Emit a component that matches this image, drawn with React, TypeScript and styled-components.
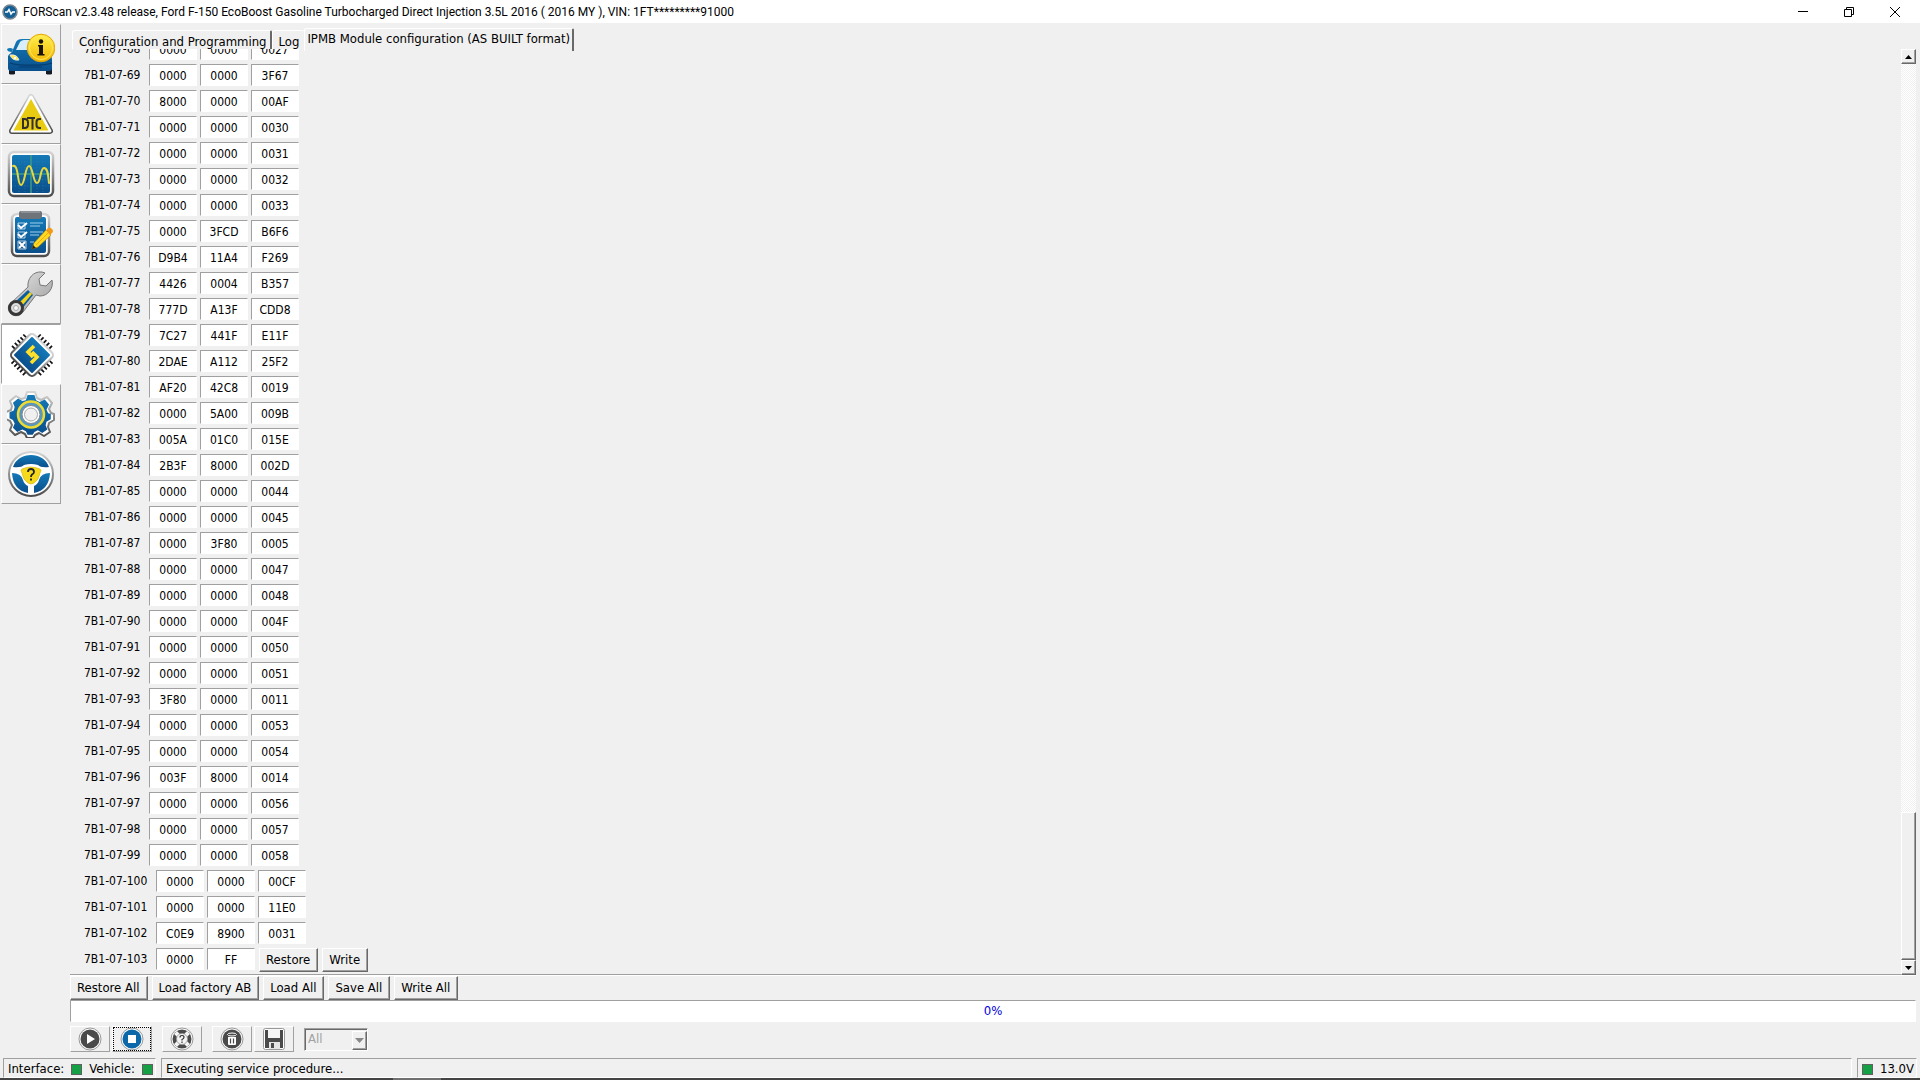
import React, { useState } from "react";
import styled, { createGlobalStyle, css } from "styled-components";

const FACE = "#f0f0f0";
const SHADE = "#a0a0a0";
const DARK = "#696969";
const LIGHT = "#ffffff";

const Global = createGlobalStyle`
  * { box-sizing: border-box; }
  body { margin: 0; overflow: hidden; background: ${FACE}; }
  body, button, input, select {
    font-family: Tahoma, "DejaVu Sans Condensed", "Noto Sans", sans-serif;
    font-size: 13px;
    line-height: 16px;
    color: #000;
  }
`;

const Window = styled.div`
  display: flex;
  flex-direction: column;
  height: 100vh;
  background: ${FACE};
`;

const TitleBar = styled.header`
  display: flex;
  align-items: center;
  flex: none;
  height: 23px;
  padding: 0 2px;
  background: #fff;
`;

const Title = styled.h1`
  flex: 1;
  margin: 0 0 0 5px;
  font: 400 12px/16px "Segoe UI", Roboto, sans-serif;
  white-space: nowrap;
`;

const CaptionButton = styled.button`
  display: grid;
  place-items: center;
  width: 46px;
  height: 22px;
  padding: 0;
  border: 0;
  background: none;
`;

const Body = styled.div`
  display: flex;
  flex: 1;
  min-height: 0;
`;

const Sidebar = styled.nav`
  display: flex;
  flex-direction: column;
  flex: none;
  width: 62px;
  padding: 1px 1px 0 1px;
`;

const SideButton = styled.button<{ $active?: boolean }>`
  display: grid;
  place-items: center;
  height: 60px;
  padding: ${(p) => (p.$active ? "2px 0 0 2px" : "0")};
  border: 1px solid;
  border-color: ${(p) => (p.$active ? `${SHADE} #fff #fff ${SHADE}` : `#fff ${SHADE} ${SHADE} #fff`)};
  background: ${(p) => (p.$active ? "#fff" : FACE)};
  svg { width: 48px; height: 48px; }
`;

const Main = styled.main`
  display: flex;
  flex-direction: column;
  flex: 1;
  min-width: 0;
  padding: 5px 4px 0 8px;
`;

const Tabs = styled.div`
  display: flex;
  align-items: flex-end;
  flex: none;
  height: 21px;
  padding-left: 2px;
`;

const Tab = styled.button<{ $active?: boolean }>`
  position: relative;
  flex: none;
  height: ${(p) => (p.$active ? "23px" : "19px")};
  margin-bottom: ${(p) => (p.$active ? "-2px" : "0")};
  padding: ${(p) => (p.$active ? "0 2px 3px 2px" : "3px 3px 0 6px")};
  border: 1px solid ${LIGHT};
  border-right: 2px solid ${DARK};
  border-bottom: 0;
  border-radius: 3px 2px 0 0;
  background: ${FACE};
  white-space: nowrap;
  z-index: ${(p) => (p.$active ? 2 : 1)};
`;

const LastTab = styled(Tab)`
  padding-right: 5px;
  border-right: 0;
`;

const Pane = styled.section`
  display: flex;
  flex: 1;
  min-height: 0;
`;

const Rows = styled.div`
  display: flex;
  flex-direction: column;
  justify-content: flex-end;
  flex: 1;
  overflow: hidden;
  padding-left: 14px;
  border-bottom: 1px solid ${SHADE};
`;

const Row = styled.div`
  display: flex;
  flex: none;
  gap: 3px;
  height: 26px;
`;

const RowLabel = styled.span<{ $wide: boolean }>`
  width: ${(p) => (p.$wide ? "69px" : "62px")};
  padding-top: 3px;
  font-size: 12px;
  white-space: nowrap;
`;

const Field = styled.input`
  width: 48px;
  height: 22px;
  padding: 2px 0 0;
  border: 1px solid;
  border-color: ${SHADE} #fff #fff ${SHADE};
  border-radius: 0;
  background: #fff;
  font-size: 12px;
  text-align: center;
  outline: 0;
`;

const PushButton = styled.button`
  flex: none;
  height: 24px;
  padding: 0 7px 0 6px;
  border: 1px solid;
  border-color: #fff ${DARK} ${DARK} #fff;
  box-shadow: inset -1px -1px 0 ${SHADE};
  background: ${FACE};
  white-space: nowrap;
`;

const RowActions = styled.div`
  display: flex;
  gap: 4px;
  padding-left: 1px;
`;

const Scrollbar = styled.div`
  display: flex;
  flex-direction: column;
  justify-content: space-between;
  flex: none;
  width: 15px;
  background: repeating-conic-gradient(#fff 0 25%, ${FACE} 0 50%) 0 0 / 2px 2px;
`;

const bevel = css`
  border: 1px solid;
  border-color: #fff ${DARK} ${DARK} #fff;
  box-shadow: inset -1px -1px 0 ${SHADE};
  background: ${FACE};
`;

const ScrollButton = styled.button`
  display: grid;
  place-items: center;
  width: 15px;
  height: 15px;
  padding: 0;
  ${bevel}
`;

const ScrollTrack = styled.div`
  display: flex;
  flex: 1;
  flex-direction: column;
  justify-content: flex-end;
`;

const Thumb = styled.div`
  height: 16.5%;
  ${bevel}
`;

const Actions = styled.div`
  display: flex;
  flex: none;
  gap: 4px;
  border-top: 1px solid #fff;
`;

const Progress = styled.div`
  display: grid;
  place-items: center;
  flex: none;
  height: 22px;
  border: 1px solid;
  border-color: ${SHADE} #fff #fff ${SHADE};
  background: #fff;
  color: #0000e0;
`;

const Toolbar = styled.div`
  display: flex;
  align-items: center;
  flex: none;
  padding: 4px 0 6px;
`;

const ToolButton = styled.button<{ $gap?: number; $focused?: boolean }>`
  display: grid;
  place-items: center;
  width: 40px;
  height: 26px;
  margin-right: ${(p) => p.$gap ?? 2}px;
  padding: 0;
  border: 1px solid;
  border-color: #fff ${SHADE} ${SHADE} #fff;
  background: ${FACE};
  outline: ${(p) => (p.$focused ? "1px dotted #000" : "0")};
  outline-offset: -2px;
  svg { width: 24px; height: 24px; }
`;

const SelectBox = styled.div`
  display: flex;
  width: 64px;
  height: 23px;
  border: 1px solid;
  border-color: ${SHADE} #fff #fff ${SHADE};
  box-shadow: inset 1px 1px 0 ${DARK};
`;

const Select = styled.select`
  flex: 1;
  appearance: none;
  padding: 0 0 0 3px;
  border: 0;
  background: none;
  color: #a0a0a0;
  opacity: 1;
`;

const DropArrow = styled.span`
  display: grid;
  place-items: center;
  width: 15px;
  height: 19px;
  margin-top: 2px;
  pointer-events: none;
  ${bevel}
`;

const StatusBar = styled.footer`
  display: flex;
  flex: none;
  gap: 5px;
  height: 20px;
  padding: 0 3px;
`;

const StatusPanel = styled.div<{ $grow?: boolean }>`
  display: flex;
  align-items: center;
  flex: ${(p) => (p.$grow ? "1" : "none")};
  gap: 7px;
  padding: 2px 2px 0 4px;
  border: 1px solid;
  border-color: ${SHADE} #fff #fff ${SHADE};
  white-space: nowrap;
`;

const Lamp = styled.i`
  width: 11px;
  height: 11px;
  border: 1px solid #606060;
  background: #16a045;
`;

const Taskbar = styled.div`
  flex: none;
  height: 2px;
  padding-left: 393px;
  background: #444;
  &::before { content: ""; display: block; width: 48px; height: 2px; background: #707070; }
`;

const DATA = `68 0000 0000 0027
69 0000 0000 3F67
70 8000 0000 00AF
71 0000 0000 0030
72 0000 0000 0031
73 0000 0000 0032
74 0000 0000 0033
75 0000 3FCD B6F6
76 D9B4 11A4 F269
77 4426 0004 B357
78 777D A13F CDD8
79 7C27 441F E11F
80 2DAE A112 25F2
81 AF20 42C8 0019
82 0000 5A00 009B
83 005A 01C0 015E
84 2B3F 8000 002D
85 0000 0000 0044
86 0000 0000 0045
87 0000 3F80 0005
88 0000 0000 0047
89 0000 0000 0048
90 0000 0000 004F
91 0000 0000 0050
92 0000 0000 0051
93 3F80 0000 0011
94 0000 0000 0053
95 0000 0000 0054
96 003F 8000 0014
97 0000 0000 0056
98 0000 0000 0057
99 0000 0000 0058
100 0000 0000 00CF
101 0000 0000 11E0
102 C0E9 8900 0031
103 0000 FF`
  .split("\n")
  .map((line) => line.split(" "));

const HiddenDefs = styled.svg`
  position: absolute;
`;

function Gradients() {
  return (
    <HiddenDefs width="0" height="0" aria-hidden="true">
      <defs>
        <linearGradient id="blue" x1="0" y1="0" x2="0" y2="1">
          <stop offset="0" stopColor="#1379b6" />
          <stop offset="1" stopColor="#0a4f8c" />
        </linearGradient>
        <linearGradient id="gold" x1="0" y1="0" x2="0" y2="1">
          <stop offset="0" stopColor="#fff04a" />
          <stop offset="1" stopColor="#f2b705" />
        </linearGradient>
        <linearGradient id="rim" x1="0" y1="0" x2="0" y2="1">
          <stop offset="0" stopColor="#d4d4d4" />
          <stop offset="1" stopColor="#4c4c4c" />
        </linearGradient>
        <linearGradient id="steel" x1="0" y1="0" x2="1" y2="1">
          <stop offset="0" stopColor="#e8e8e8" />
          <stop offset="1" stopColor="#999" />
        </linearGradient>
      </defs>
    </HiddenDefs>
  );
}

const CarIcon = () => (
  <svg viewBox="0 0 48 48">
    <path d="M2 37h6v7q-3 1-6 0zM39 37h6v7q-3 1-6 0z" fill="#151b22" />
    <path d="M1 26c1-2 3-3 4-4l4-10c1-2 3-3 6-3h17c4 0 5 2 7 6l4 9c2 2 2 5 2 7v7c0 2-1 3-3 3H4c-2 0-3-1-3-3v-6c0-3 0-4 0-6z" fill="url(#blue)" />
    <path d="M0 19q3-2 6 0l-1 3c-3 0-5-1-5-3z" fill="#1379b6" />
    <path d="M9 20l4-8c1-1 2-2 4-2h6l-2 10z" fill="#d8eefa" />
    <path d="M3 33c8 3 34 3 42 0M12 37h23M14 35h20" stroke="#063c6e" strokeWidth="1.200" fill="none" />
    <path d="M3 25q7-1 9 5-7 1-9-5z" fill="#ffe44c" stroke="#e8f3fa" strokeWidth=".8" />
    <circle cx="8" cy="28" r="1.200" fill="#fff" />
    <circle cx="34" cy="18" r="13.800" fill="url(#gold)" stroke="#e6a600" strokeWidth="1" />
    <circle cx="34" cy="18" r="11.500" fill="none" stroke="#ffe75a" strokeWidth="1" />
    <circle cx="34" cy="11.500" r="2.200" fill="#17130a" />
    <path d="M31 15h5v9h1.500v1.500h-7V24H32v-7.500h-1z" fill="#17130a" />
  </svg>
);

const DtcIcon = () => (
  <svg viewBox="0 0 48 48">
    <path d="M24 7L43 41H5z" stroke="url(#rim)" strokeWidth="6" strokeLinejoin="round" fill="#fff" />
    <path d="M24 7L43 41H5z" stroke="#fff" strokeWidth="3" strokeLinejoin="round" fill="url(#gold)" />
    <path d="M24 9L41.500 40.500h-35z" fill="#e9cb12" />
    <g fill="none" stroke="#33302a" strokeWidth="2">
      <path d="M16 29v9h1.500q3.500 0 3.500-3.500v-2q0-3.500-3.500-3.500zM20 28h8M25.500 28v11.500M34 29h-1.500q-3 0-3 3v3q0 3 3 3H34" />
    </g>
  </svg>
);

const ScopeIcon = () => (
  <svg viewBox="0 0 48 48">
    <rect x="2" y="2" width="44" height="44" rx="5" fill="#fff" stroke="url(#rim)" strokeWidth="2.500" />
    <rect x="5" y="5" width="38" height="38" rx="2" fill="url(#blue)" />
    <path d="M24 5v38M5 24h38" stroke="#3f9a84" strokeWidth="1.500" />
    <path d="M12 5v38M18 5v38M30 5v38M36 5v38M5 12h38M5 18h38M5 30h38M5 36h38" stroke="#2f84a8" strokeWidth=".5" strokeDasharray="1 2" />
    <path d="M6 16c6-2 4 19 8 19s4-19 8-19 4 17 8 17 3-15 7-15 4 7 5 15" fill="none" stroke="#e8d63a" strokeWidth="2" strokeLinecap="round" />
  </svg>
);

const ClipboardIcon = () => (
  <svg viewBox="0 0 48 48">
    <rect x="5" y="4" width="37" height="42" rx="5" fill="#fff" stroke="url(#rim)" strokeWidth="2.500" />
    <rect x="8" y="7" width="31" height="36" rx="2" fill="url(#blue)" />
    <path d="M12 3q0-2 2-2h19q2 0 2 2v3q0 3-3 3H15q-3 0-3-3z" fill="#6e747a" />
    <path d="M14 2h19" stroke="#a9afb3" />
    <g fill="none" stroke="#fff" strokeWidth="2">
      <path d="M11 15l3 3 6-5M11 24l3 3 6-5" />
      <path d="M12 32l6 6M18 32l-6 6" />
      <path d="M11 13h7v6h-7zM11 22h7v6h-7zM11 31h8v8h-8z" strokeWidth=".7" />
    </g>
    <path d="M23 13h13M23 16h10M23 22h13M23 25h9M23 32h4" stroke="#9bd0ee" strokeWidth="1" />
    <path d="M25 39l2-6 12-13 5 5-13 12z" fill="#ffda21" stroke="#b37d00" strokeWidth=".6" />
    <path d="M39 20l2-2q2-1 4 1t0 4l-2 2z" fill="#f29a18" />
    <path d="M25 39l1-4 3 3z" fill="#29231c" />
    <path d="M29 35l12-12" stroke="#f0a914" />
  </svg>
);

const WrenchIcon = () => (
  <svg viewBox="0 0 48 48">
    <path d="M3 34L21 17c-1-8 5-16 14-15l3 1-6 6 1 6 6 1 6-6c2 8-4 16-12 16l-4-1-13 17c-4 6-12 4-14-1-1-3-1-5 1-7z" fill="url(#steel)" stroke="#777" strokeWidth="1" />
    <path d="M8 32L21 20l5 5-11 14z" fill="#0b5e9e" />
    <path d="M12 33l11-11 2 2-11 13z" fill="#f2d31a" />
    <circle cx="9" cy="38" r="6.500" fill="#ddd" stroke="#383838" strokeWidth="3" />
    <circle cx="9" cy="38" r="2.500" fill="#f7f7f7" stroke="#aaa" />
  </svg>
);

const ChipIcon = () => (
  <svg viewBox="0 0 48 48">
    <path d="M18 5L5 18M30 5l13 13M5 30l13 13M43 30L30 43" stroke="#111" strokeWidth="6" strokeDasharray="1.700 2.300" />
    <rect x="8" y="8" width="32" height="32" rx="4" transform="rotate(45 24 24)" fill="#fff" stroke="url(#rim)" strokeWidth="2" />
    <rect x="11" y="11" width="26" height="26" rx="1" transform="rotate(45 24 24)" fill="url(#blue)" />
    <path d="M26 15l-6 6 5 5M23 32l6-6-5-5" fill="none" stroke="#ffe02a" strokeWidth="3.600" />
  </svg>
);

const GEAR =
  "M20 2h8l2 6 4 2 6-3 5 6-3 6 2 4 3 1v6l-5 3-1 4 2 5-6 4-5-3-4 2-2 3h-6l-2-4-4-2-6 3-5-5 2-5-2-4-4-2v-7l5-2 1-4-2-5 6-5 5 3 4-1z";

const GearIcon = () => (
  <svg viewBox="0 0 48 48">
    <path d={GEAR} fill="#fff" stroke="url(#rim)" strokeWidth="2" strokeLinejoin="round" />
    <path d={GEAR} transform="translate(24 24) scale(.86) translate(-24 -24)" fill="url(#blue)" />
    <circle cx="24" cy="24.500" r="13" fill="#5898be" stroke="#eedb32" strokeWidth="2.500" />
    <circle cx="24" cy="24.500" r="9" fill="#fff" stroke="#888" strokeWidth="1" />
    <circle cx="24" cy="24.500" r="6.500" fill={FACE} stroke="#aaa" strokeWidth="1" />
  </svg>
);

const WheelIcon = () => (
  <svg viewBox="0 0 48 48">
    <circle cx="24" cy="24" r="22" fill="#fff" stroke="url(#rim)" strokeWidth="2" />
    <path d="M6 17C11 1 37 1 42 17q-8 1-11-2-7-2-14 0-3 3-11 2z" fill="url(#blue)" />
    <path d="M5 23q9 0 11 7 1 4 5 6v7Q6 40 5 23zM43 23q-9 0-11 7-1 4-5 6v7Q42 40 43 23z" fill="url(#blue)" />
    <path d="M15 19q9-4 18 0 2 1 0 4-1 7-6 10-3 2-6 0-5-3-6-10-2-3 0-4z" fill="#f4d91c" stroke="#d3b40c" strokeWidth=".6" />
    <path d="M21 22q0-3 3-3t3 3q0 1.500-2 2.500-1 1-1 2.500M24 28.500v2" fill="none" stroke="#222" strokeWidth="1.800" />
  </svg>
);

const Disc = ({ fill, children }: { fill: string; children: React.ReactNode }) => (
  <svg viewBox="0 0 24 24">
    <circle cx="12" cy="12" r="11" fill="#fff" />
    <circle cx="12" cy="12" r="9.500" fill={fill} />
    {children}
    <circle cx="12" cy="12" r="11" fill="none" stroke="#999" />
  </svg>
);

const PlayIcon = () => (
  <Disc fill="#4a4a4a">
    <path d="M9 7l8 5-8 5z" fill="#fff" />
  </Disc>
);

const StopIcon = () => (
  <Disc fill="#0c68a8">
    <rect x="8" y="8" width="8" height="8" fill="#fff" />
  </Disc>
);

const HelpIcon = () => (
  <Disc fill="#4a4a4a">
    <path d="M5.500 5.500l13 13M18.500 5.500l-13 13" stroke="#f4f4f4" strokeWidth="4" />
    <circle cx="12" cy="12" r="5.500" fill="#f4f4f4" stroke="#999" strokeWidth=".8" />
    <path d="M10 10.500q0-2 2-2t2 1.700q0 1.300-2 2.300v1M12 14.500v1.500" fill="none" stroke="#333" strokeWidth="1.200" />
  </Disc>
);

const TrashIcon = () => (
  <Disc fill="#4a4a4a">
    <ellipse cx="12" cy="7.500" rx="4.500" ry="1.500" fill="none" stroke="#fff" />
    <path d="M8 10h8v7q0 1-1 1H9q-1 0-1-1z" fill="#fff" />
    <path d="M10.500 11.500v5M13.500 11.500v5" stroke="#4a4a4a" strokeWidth="1.200" />
  </Disc>
);

const DiskIcon = () => (
  <svg viewBox="0 0 24 24">
    <rect x="1.500" y="1.500" width="21" height="21" rx="2" fill="#fff" stroke="#999" />
    <path d="M3 3h18v18H3z" fill="#4a4a4a" />
    <path d="M6 2h12v9H6z" fill="#f6f6f6" />
    <path d="M7 15h11v7H7z" fill="#e4e4e4" />
    <path d="M9 16h3v5H9z" fill="#4a4a4a" />
  </svg>
);

const Triangle = ({ up, fill = "#000", size = 7 }: { up?: boolean; fill?: string; size?: number }) => (
  <svg width={size} height={(size + 1) / 2} viewBox="0 0 7 4" preserveAspectRatio="none">
    <path d={up ? "M0 4L3.500 0 7 4z" : "M0 0h7L3.500 4z"} fill={fill} />
  </svg>
);

const SIDE = [
  { name: "Vehicle information", Icon: CarIcon },
  { name: "Trouble codes", Icon: DtcIcon },
  { name: "Oscilloscope", Icon: ScopeIcon },
  { name: "Tests", Icon: ClipboardIcon },
  { name: "Service", Icon: WrenchIcon },
  { name: "Configuration", Icon: ChipIcon },
  { name: "Settings", Icon: GearIcon },
  { name: "Help", Icon: WheelIcon },
];

function ModuleRow({ cells }: { cells: string[] }) {
  const [index, ...words] = cells;
  const name = `7B1-07-${index}`;
  const [values, setValues] = useState(words);
  return (
    <Row>
      <RowLabel $wide={index.length > 2}>{name}</RowLabel>
      {values.map((value, i) => (
        <Field
          key={i}
          aria-label={`${name} word ${i + 1}`}
          value={value}
          maxLength={4}
          onChange={(e) => setValues(values.map((v, n) => (n === i ? e.target.value : v)))}
        />
      ))}
      {words.length < 3 && (
        <RowActions>
          <PushButton>Restore</PushButton>
          <PushButton>Write</PushButton>
        </RowActions>
      )}
    </Row>
  );
}

export default function App() {
  return (
    <Window>
      <Global />
      <Gradients />
      <TitleBar>
        <svg width="16" height="16" viewBox="0 0 16 16">
          <circle cx="8" cy="8" r="7" fill="#145f96" stroke="#7b8790" strokeWidth="1.500" />
          <path d="M3 8h2.500L7 5.500l2 4.500 1.500-2H13" fill="none" stroke="#fff" strokeWidth="1.500" />
        </svg>
        <Title>
          FORScan v2.3.48 release, Ford F-150 EcoBoost Gasoline Turbocharged Direct Injection 3.5L 2016 ( 2016 MY ), VIN: 1FT*********91000
        </Title>
        <CaptionButton aria-label="Minimize">
          <svg width="10" height="10"><path d="M0 4.500h10" stroke="#000" /></svg>
        </CaptionButton>
        <CaptionButton aria-label="Restore window">
          <svg width="10" height="10"><path d="M.5 2.500h7v7h-7zM2.500 2.500v-2h7v7h-2" fill="none" stroke="#000" /></svg>
        </CaptionButton>
        <CaptionButton aria-label="Close">
          <svg width="10" height="10"><path d="M0 0l10 10M10 0L0 10" stroke="#000" /></svg>
        </CaptionButton>
      </TitleBar>
      <Body>
        <Sidebar>
          {SIDE.map(({ name, Icon }) => (
            <SideButton key={name} aria-label={name} $active={name === "Configuration"}>
              <Icon />
            </SideButton>
          ))}
        </Sidebar>
        <Main>
          <Tabs>
            <Tab>Configuration and Programming</Tab>
            <LastTab>Log</LastTab>
            <Tab $active>IPMB Module configuration (AS BUILT format)</Tab>
          </Tabs>
          <Pane>
            <Rows>
              {DATA.map((cells) => (
                <ModuleRow key={cells[0]} cells={cells} />
              ))}
            </Rows>
            <Scrollbar>
              <ScrollButton aria-label="Scroll up"><Triangle up /></ScrollButton>
              <ScrollTrack><Thumb /></ScrollTrack>
              <ScrollButton aria-label="Scroll down"><Triangle /></ScrollButton>
            </Scrollbar>
          </Pane>
          <Actions>
            <PushButton>Restore All</PushButton>
            <PushButton>Load factory AB</PushButton>
            <PushButton>Load All</PushButton>
            <PushButton>Save All</PushButton>
            <PushButton>Write All</PushButton>
          </Actions>
          <Progress>0%</Progress>
          <Toolbar>
            <ToolButton aria-label="Start"><PlayIcon /></ToolButton>
            <ToolButton aria-label="Stop" $focused $gap={10}><StopIcon /></ToolButton>
            <ToolButton aria-label="Procedure help" $gap={10}><HelpIcon /></ToolButton>
            <ToolButton aria-label="Clear"><TrashIcon /></ToolButton>
            <ToolButton aria-label="Save" $gap={10}><DiskIcon /></ToolButton>
            <SelectBox>
              <Select aria-label="Filter" disabled><option>All</option></Select>
              <DropArrow><Triangle fill="#888" size={9} /></DropArrow>
            </SelectBox>
          </Toolbar>
        </Main>
      </Body>
      <StatusBar>
        <StatusPanel>
          <span>Interface:</span>
          <Lamp />
          <span>Vehicle:</span>
          <Lamp />
        </StatusPanel>
        <StatusPanel $grow>Executing service procedure...</StatusPanel>
        <StatusPanel>
          <Lamp />
          <span>13.0V</span>
        </StatusPanel>
      </StatusBar>
      <Taskbar />
    </Window>
  );
}
